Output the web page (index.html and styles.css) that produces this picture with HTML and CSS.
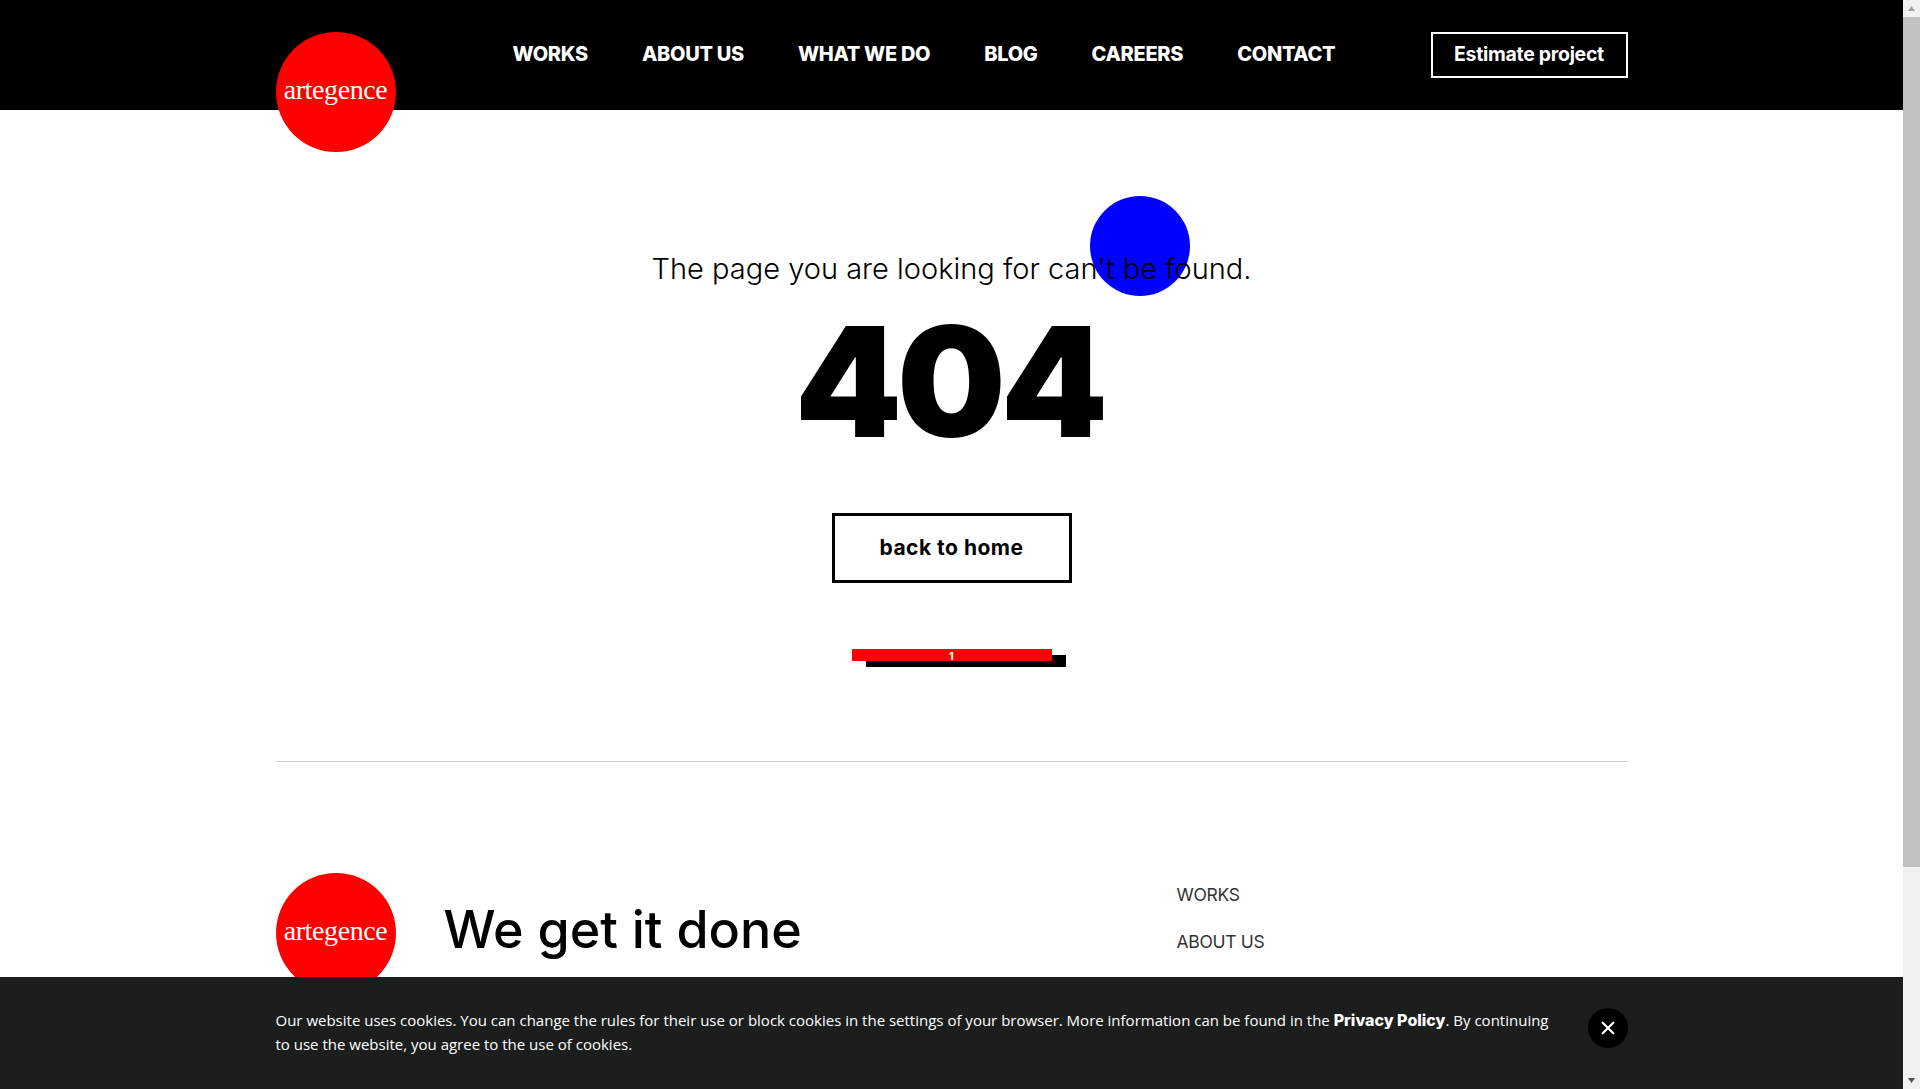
FILE: index.html
```html
<!DOCTYPE html>
<html lang="en">
<head>
    <meta charset="UTF-8">
    <meta name="viewport" content="width=device-width, initial-scale=1.0">
    <title>Artegence - 404</title>
    <link rel="stylesheet" href="styles.css">
</head>
<body>
    <div class="page">
        <header class="site-header">
            <div class="container header-row">
                <a class="logo" href="#">artegence</a>
                <nav class="main-nav">
                    <a href="#">WORKS</a>
                    <a href="#">ABOUT US</a>
                    <a href="#">WHAT WE DO</a>
                    <a href="#">BLOG</a>
                    <a href="#">CAREERS</a>
                    <a href="#">CONTACT</a>
                </nav>
                <a class="estimate-btn" href="#">Estimate project</a>
            </div>
        </header>

        <div class="blue-dot"></div>

        <main class="not-found">
            <p class="not-found-text">The page you are looking for can't be found.</p>
            <h1 class="not-found-code">404</h1>
            <a class="home-btn" href="#">back to home</a>
            <div class="pager">
                <div class="pager-back"></div>
                <div class="pager-front">1</div>
            </div>
        </main>

        <footer class="container site-footer">
            <div class="footer-row">
                <a class="logo" href="#">artegence</a>
                <h2 class="footer-title">We get it done</h2>
                <nav class="footer-nav">
                    <a href="#">WORKS</a>
                    <a href="#">ABOUT US</a>
                </nav>
            </div>
        </footer>

        <div class="cookie-bar">
            <div class="container cookie-row">
                <p class="cookie-text">Our website uses cookies. You can change the rules for their use or block cookies in the settings of your browser. More information can be found in the <a href="#">Privacy Policy</a>. By continuing to use the website, you agree to the use of cookies.</p>
                <button class="cookie-close" aria-label="Close">
                    <svg width="16" height="16" viewBox="0 0 16 16"><path d="M2 2 L14 14 M14 2 L2 14" stroke="#fff" stroke-width="2.2" fill="none"/></svg>
                </button>
            </div>
        </div>
    </div>

    <div class="scrollbar">
        <svg class="scroll-arrow" width="17" height="17" viewBox="0 0 17 17"><path d="M8.5 6 L12 11 L5 11 Z" fill="#a3a3a3"/></svg>
        <div class="scroll-thumb"></div>
        <svg class="scroll-arrow" width="17" height="17" viewBox="0 0 17 17"><path d="M8.5 11 L12 6 L5 6 Z" fill="#505050"/></svg>
    </div>
</body>
</html>
```

FILE: styles.css
```css
* {
    box-sizing: border-box;
}
html, body {
    margin: 0;
    height: 100%;
    overflow: hidden;
}
body {
    display: flex;
    background: #fff;
    color: #000;
    font-family: Inter, sans-serif;
}
a {
    color: inherit;
    text-decoration: none;
}
.page {
    position: relative;
    flex: 1;
    height: 100vh;
    overflow: hidden;
}
.container {
    width: 1352px;
    margin: 0 auto;
}

/* header */
.site-header {
    height: 110px;
    background: #000;
    color: #fff;
}
.header-row {
    display: flex;
    align-items: flex-start;
}
.logo {
    flex: none;
    display: flex;
    align-items: center;
    justify-content: center;
    width: 120px;
    height: 120px;
    padding-bottom: 4px;
    border-radius: 50%;
    background: #f00;
    color: #fff;
    font-family: "Liberation Serif", serif;
    font-size: 28px;
    letter-spacing: -0.4px;
}
.header-row .logo {
    margin-top: 32px;
    position: relative;
}
.main-nav {
    display: flex;
    gap: 54px;
    margin-left: 117px;
    padding-top: 42px;
    font-size: 20px;
    line-height: 24px;
    font-weight: 800;
    letter-spacing: -0.3px;
}
.estimate-btn {
    margin-left: auto;
    margin-top: 32px;
    width: 197px;
    height: 46px;
    border: 2px solid #fff;
    text-align: center;
    font-size: 19.5px;
    line-height: 40px;
    font-weight: 700;
    letter-spacing: -0.3px;
}

/* 404 block */
.not-found {
    position: relative;
    display: flex;
    flex-direction: column;
    align-items: center;
    height: 651px;
    padding-top: 139px;
}
.not-found-text {
    margin: 0;
    font-size: 29px;
    line-height: 40px;
    font-weight: 300;
}
.not-found-code {
    margin: -2px 0 0;
    padding-right: 5px;
    font-size: 153px;
    line-height: 190px;
    font-weight: 900;
    letter-spacing: -5px;
}
.home-btn {
    margin-top: 36px;
    width: 240px;
    height: 70px;
    border: 3px solid #000;
    text-align: center;
    font-size: 21px;
    line-height: 64px;
    font-weight: 700;
    letter-spacing: 0.5px;
}
.pager {
    position: relative;
    margin-top: 66px;
    width: 200px;
    height: 12px;
}
.pager-back {
    position: absolute;
    left: 14px;
    top: 6px;
    width: 200px;
    height: 12px;
    background: #000;
}
.pager-front {
    position: relative;
    height: 12px;
    background: #f00;
    color: #fff;
    text-align: center;
    font-size: 10px;
    line-height: 14px;
    font-weight: 800;
}

/* footer */
.site-footer {
    border-top: 1px solid #d4d4d4;
    padding-top: 111px;
}
.footer-row {
    display: flex;
    align-items: flex-start;
}
.footer-title {
    margin: 23px 0 0 48px;
    width: 733px;
    font-size: 52px;
    line-height: 68px;
    font-weight: 500;
}
.footer-nav {
    display: flex;
    flex-direction: column;
    gap: 23px;
    font-size: 17.5px;
    line-height: 24px;
    letter-spacing: -0.3px;
    color: #333;
    padding-top: 10px;
}

.blue-dot {
    position: absolute;
    left: 1090px;
    top: 196px;
    width: 100px;
    height: 100px;
    border-radius: 50%;
    background: #00f;
}

/* cookies */
.cookie-bar {
    position: absolute;
    left: 0;
    right: 0;
    bottom: 0;
    height: 112px;
    background: #1c1d1d;
    color: #fff;
}
.cookie-row {
    display: flex;
    justify-content: space-between;
    padding-top: 31px;
}
.cookie-text {
    margin: 0;
    width: 1285px;
    font-family: "Open Sans", sans-serif;
    font-size: 15px;
    line-height: 24px;
}
.cookie-text a {
    font-family: Inter, sans-serif;
    font-size: 16px;
    font-weight: 800;
}
.cookie-close {
    flex: none;
    display: flex;
    align-items: center;
    justify-content: center;
    width: 40px;
    height: 40px;
    padding: 0;
    border: none;
    border-radius: 50%;
    background: #000;
}

/* drawn scrollbar */
.scrollbar {
    flex: none;
    display: flex;
    flex-direction: column;
    width: 17px;
    height: 100vh;
    background: #f1f1f1;
}
.scroll-arrow {
    flex: none;
}
.scroll-thumb {
    height: 850px;
    background: #c1c1c1;
    margin-bottom: auto;
}
```
